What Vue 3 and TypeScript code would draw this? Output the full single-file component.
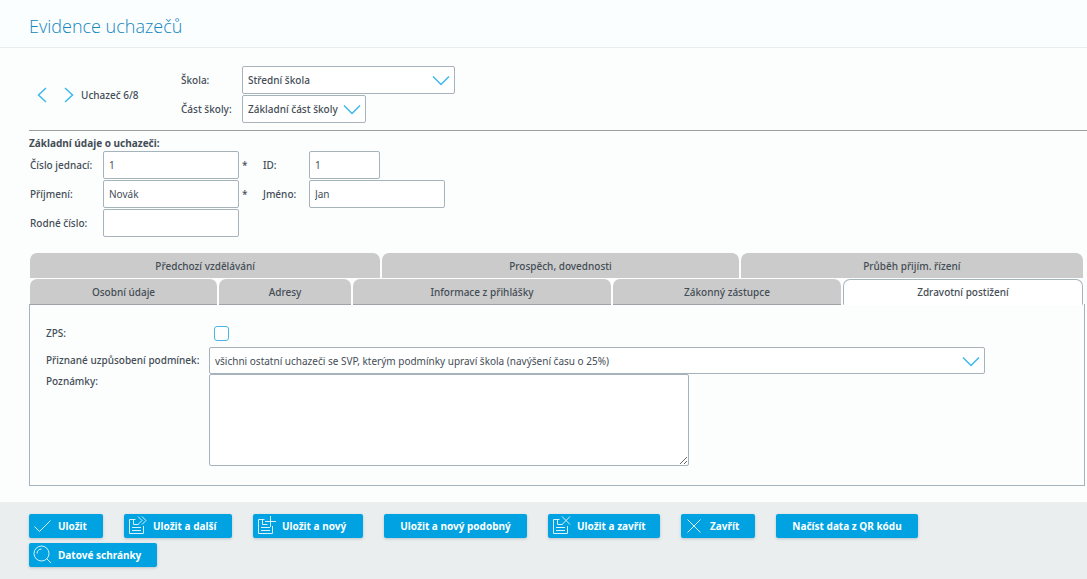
<script setup lang="ts">
import { ref } from 'vue'

interface Tab { label: string; grow: number }
type IconName = 'check' | 'next' | 'add' | 'close' | 'cross' | 'search'
interface Action { label: string; icon?: IconName; width: number }

const school = ref('Střední škola')
const part = ref('Základní část školy')
const fileNo = ref('1')
const personId = ref('1')
const surname = ref('Novák')
const firstName = ref('Jan')
const birthNo = ref('')
const zps = ref(false)
const adjustment = ref('všichni ostatní uchazeči se SVP, kterým podmínky upraví škola (navýšení času o 25%)')
const notes = ref('')
const activeTab = ref('Zdravotní postižení')

const tabRows: Tab[][] = [
  [
    { label: 'Předchozí vzdělávání', grow: 350 },
    { label: 'Prospěch, dovednosti', grow: 356 },
    { label: 'Průběh přijím. řízení', grow: 342 },
  ],
  [
    { label: 'Osobní údaje', grow: 187 },
    { label: 'Adresy', grow: 132 },
    { label: 'Informace z přihlášky', grow: 258 },
    { label: 'Zákonný zástupce', grow: 228 },
    { label: 'Zdravotní postižení', grow: 238 },
  ],
]

const actions: Action[] = [
  { label: 'Uložit', icon: 'check', width: 74 },
  { label: 'Uložit a další', icon: 'next', width: 108 },
  { label: 'Uložit a nový', icon: 'add', width: 110 },
  { label: 'Uložit a nový podobný', width: 143 },
  { label: 'Uložit a zavřít', icon: 'close', width: 112 },
  { label: 'Zavřít', icon: 'cross', width: 74 },
  { label: 'Načíst data z QR kódu', width: 142 },
  { label: 'Datové schránky', icon: 'search', width: 128 },
]
</script>

<template>
  <div class="page">
    <header class="head"><h1>Evidence uchazečů</h1></header>

    <main class="content">
      <section class="picker">
        <div class="pager">
          <button type="button" class="arrow" aria-label="Předchozí">
            <svg width="10" height="16" viewBox="0 0 10 16"><path d="M9 1 1.500 8 9 15" /></svg>
          </button>
          <button type="button" class="arrow" aria-label="Další">
            <svg width="10" height="16" viewBox="0 0 10 16"><path d="M1 1 8.500 8 1 15" /></svg>
          </button>
          <span>Uchazeč 6/8</span>
        </div>
        <div class="school">
          <label for="school">Škola:</label>
          <div class="select wide">
            <select id="school" v-model="school"><option>Střední škola</option></select>
            <svg width="18" height="11" viewBox="0 0 18 11"><path d="M1 1.500 9 9.500 17 1.500" /></svg>
          </div>
          <label for="part">Část školy:</label>
          <div class="select narrow">
            <select id="part" v-model="part"><option>Základní část školy</option></select>
            <svg width="18" height="11" viewBox="0 0 18 11"><path d="M1 1.500 9 9.500 17 1.500" /></svg>
          </div>
        </div>
      </section>

      <section class="basics">
        <h2>Základní údaje o uchazeči:</h2>
        <div class="fields">
          <label for="file-no">Číslo jednací:</label>
          <input id="file-no" v-model="fileNo" type="text">
          <span class="star">*</span>
          <label for="person-id">ID:</label>
          <input id="person-id" v-model="personId" class="short" type="text">

          <label for="surname">Příjmení:</label>
          <input id="surname" v-model="surname" type="text">
          <span class="star">*</span>
          <label for="first-name">Jméno:</label>
          <input id="first-name" v-model="firstName" type="text">

          <label for="birth-no">Rodné číslo:</label>
          <input id="birth-no" v-model="birthNo" type="text">
        </div>
      </section>

      <nav class="tabs" role="tablist">
        <div v-for="(row, i) in tabRows" :key="i" class="tab-row">
          <button
            v-for="tab in row" :key="tab.label" type="button" role="tab" class="tab"
            :class="{ active: tab.label === activeTab }" :aria-selected="tab.label === activeTab"
            :style="{ flexGrow: tab.grow }" @click="activeTab = tab.label"
          >{{ tab.label }}</button>
        </div>
      </nav>

      <section class="panel" role="tabpanel">
        <label for="zps">ZPS:</label>
        <input id="zps" v-model="zps" type="checkbox">
        <label for="adjustment">Přiznané uzpůsobení podmínek:</label>
        <div class="select full">
          <select id="adjustment" v-model="adjustment"><option>{{ adjustment }}</option></select>
          <svg width="18" height="11" viewBox="0 0 18 11"><path d="M1 1.500 9 9.500 17 1.500" /></svg>
        </div>
        <label for="notes" class="top">Poznámky:</label>
        <textarea id="notes" v-model="notes"></textarea>
      </section>
    </main>

    <footer class="actions">
      <button
        v-for="a in actions" :key="a.label" type="button" class="action"
        :class="{ iconic: a.icon }" :style="{ minWidth: a.width + 'px' }"
      >
        <svg v-if="a.icon" width="20" height="20" viewBox="0 0 20 20">
          <path v-if="a.icon === 'check'" d="M1.500 10.500 6.500 15.500 17.500 4.500" />
          <path v-else-if="a.icon === 'cross'" d="M2.500 3.500 15.500 16.500M15.500 3.500 2.500 16.500" />
          <g v-else-if="a.icon === 'search'">
            <circle cx="8.500" cy="8.500" r="7.500" /><path d="M14 14 18 18M4 8.500A4.500 4.500 0 0 1 8.500 4" />
          </g>
          <g v-else>
            <path d="M7.500 3.500H1.500V17.500H15.500V10M5.500 3.500V8.500H10.500M4 11.500H13M4 14.500H13" />
            <path v-if="a.icon === 'next'" d="M10 0.500 14 4.500 10 8.500M14 0.500 18 4.500 14 8.500" />
            <path v-else-if="a.icon === 'add'" d="M13.500 0V11M8 5.500H19" />
            <path v-else d="M10 0.500 18 8.500M18 0.500 10 8.500" />
          </g>
        </svg>
        <span>{{ a.label }}</span>
      </button>
    </footer>
  </div>
</template>

<style>
body { margin: 0; background: #eaeeef; }
</style>

<style scoped>
.page {
  font-family: "Noto Sans", "Open Sans", sans-serif;
  font-size: 10px;
  font-weight: 500;
  line-height: 16px;
  color: #444d56;
  background: #fcfefe;
}
button, input, select, textarea { font: inherit; color: inherit; box-sizing: border-box; margin: 0; }
.head { padding: 10px 29px 5px; border-bottom: 1px solid #e9ebec; background: #fbfeff; }
h1 { margin: 0; font-family: "Open Sans", "Noto Sans", sans-serif; font-size: 18px; line-height: 32px; font-weight: 300; color: #1286bd; }
.content { padding: 18px 2px 16px 29px; }
.picker { display: flex; align-items: center; padding-bottom: 7px; margin-right: -2px; border-bottom: 1px solid #9b9fa2; }
.pager { display: flex; align-items: center; width: 144px; padding-left: 8px; gap: 7px; }
.arrow { border: 0; padding: 0; background: none; display: flex; }
.arrow + .arrow { margin-left: 10px; }
.arrow svg, .select svg { fill: none; stroke: #3db8ea; stroke-width: 1.500; }
.school { display: grid; grid-template-columns: 61px auto; row-gap: 1px; align-items: center; }
.select { position: relative; }
.select select {
  display: block; width: 100%; height: 28px; padding: 0 24px 0 5px; appearance: none;
  border: 1px solid #a7b3bb; border-radius: 2px; background: #fff; outline: none;
}
.select svg { position: absolute; right: 5px; top: 9px; pointer-events: none; }
.wide { width: 213px; }
.narrow { width: 124px; }
.full { max-width: 776px; }
.full select { height: 27px; font-weight: 400; }
h2 { margin: 0; padding-top: 4px; font-size: 10px; line-height: 16px; font-weight: 700; }
.fields {
  display: grid; grid-template-columns: 73px 136px 24px 46px 136px; row-gap: 1px;
  align-items: center; padding-left: 1px;
}
.fields input {
  width: 100%; height: 28px; padding: 0 5px; border: 1px solid #a7b3bb; border-radius: 2px;
  background: #fff; outline: none; font-weight: 400;
}
.fields .short { width: 71px; }
.star { padding-left: 3px; }
.tabs { padding: 16px 2px 0 1px; }
.tab-row { display: flex; gap: 2px; }
.tab-row + .tab-row { margin-top: 1px; }
.tab {
  flex: 1 1 0; height: 25px; padding: 0; border: 0; border-radius: 7px 7px 0 0;
  background: #cbcbcb; text-align: center;
}
.tab-row + .tab-row .tab { height: 26px; border-bottom: 1px solid #9da3a6; }
.tab-row + .tab-row .tab.active {
  background: #fff; border: 1px solid #a7b3bb; border-bottom-color: #fff;
}
.panel {
  margin-top: -1px; padding: 16px 16px 19px; border: 1px solid #a7b3bb; border-top: 0;
  display: grid; grid-template-columns: 163px 1fr; align-items: center;
}
.panel input {
  appearance: none; width: 15px; height: 15px; margin: 0 0 0 5px; border: 1px solid #49b7e4;
  border-radius: 3px; background: #fff;
}
.panel label { line-height: 27px; }
.panel .top { align-self: start; line-height: 14px; }
textarea {
  display: block; width: 480px; max-width: 100%; height: 92px; border: 1px solid #a7b3bb;
  border-radius: 2px; background: #fff; resize: both; outline: none;
}
.actions {
  display: flex; flex-wrap: wrap; gap: 5px 21px; padding: 12px 40px 12px 29px; background: #eaeeef;
}
.action {
  height: 24px; padding: 0 4px; border: 0; border-radius: 2px; background: #00a2e2; color: #fff;
  display: flex; align-items: center; justify-content: center; font-weight: 700;
  white-space: nowrap; box-shadow: 0 1px 3px #bcc5c9;
}
.iconic { justify-content: flex-start; gap: 5px; }
.action svg { fill: none; stroke: #d9f2fc; stroke-width: 1; }
</style>
